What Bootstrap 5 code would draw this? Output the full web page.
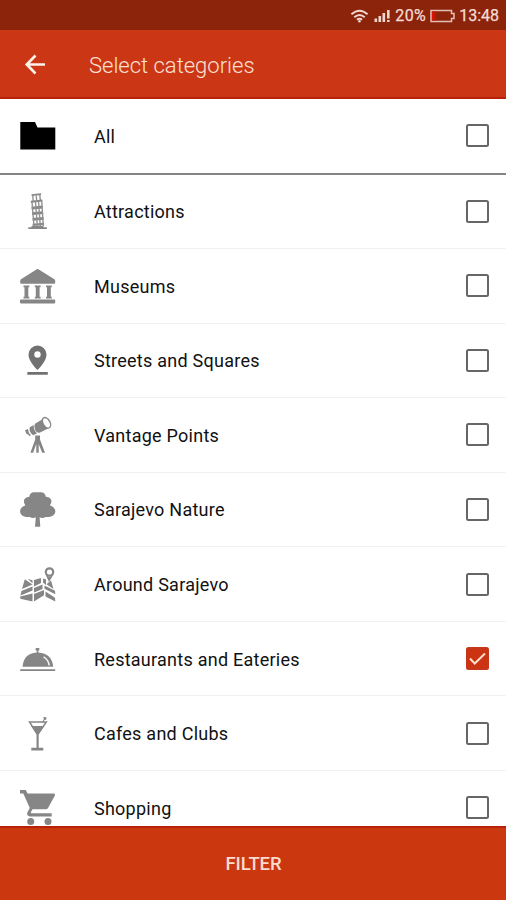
<!DOCTYPE html>
<html lang="en">
<head>
<meta charset="utf-8">
<meta name="viewport" content="width=device-width, initial-scale=1">
<title>Select categories</title>
<link href="https://cdn.jsdelivr.net/npm/bootstrap@5.3.0/dist/css/bootstrap.min.css" rel="stylesheet">
<style>
body{font-family:Roboto,"Liberation Sans",sans-serif;height:900px;background:#fff;color:#111}
.status-bar{height:30px;background:#8c240c;color:#f3dcd4;font-size:16px;padding:1px 7px 0 0}
.clock-text,.battery-text{-webkit-text-stroke:.25px #f3dcd4}
.battery-text{letter-spacing:.4px}
.app-bar{height:69px;background:#cb3714;border-bottom:2px solid #b92208;padding:2px 0 0 23px}
.app-title{font-size:22px;font-weight:300;color:#fbe0d6;margin-left:42px;letter-spacing:0;padding-top:3px}
.back-btn{width:24px;height:24px}
.category-list{min-height:0}
.category-row{height:74.55px;flex:none;border-bottom:1.5px solid #f2f2f2;padding:0 17px 0 18px;border-radius:0}
.category-row.row-all{height:75.5px;border-bottom:2px solid #858585}
.category-row svg{width:40px;height:40px;flex:none;fill:#868686}
.category-name{font-size:18px;margin-left:36px;letter-spacing:.25px;line-height:24px;padding-top:2px}
.check-box.form-check-input{width:23px;height:23px;margin:0;border:2px solid #666;border-radius:2.5px;background-size:21px;flex:none;background-color:#fff}
.check-box.form-check-input:checked{background-color:#cc3312;border-color:#c5371a;background-image:url("data:image/svg+xml,%3Csvg xmlns='http://www.w3.org/2000/svg' viewBox='0 0 21 21'%3E%3Cpath d='M3 10.5l4.7 5L18 5.5' fill='none' stroke='%23fbe0cd' stroke-width='2'/%3E%3C/svg%3E")}
.filter-btn.btn{height:74px;background:#cb370f;border:0;border-top:2px solid #b92208;border-radius:0;color:#fbdccf;font-size:18.500px;font-weight:500;letter-spacing:-.1px;flex:none;padding:2px 0 0 1px}
</style>
</head>
<body class="d-flex flex-column overflow-hidden">
<div class="status-bar d-flex align-items-center justify-content-end flex-shrink-0">
  <svg width="19" height="16" viewBox="0 0 20 16" fill="none" stroke="#f0d5cc" stroke-width="2"><path d="M1.500 6.200Q10-1.200 18.500 6.200M4.500 9.300Q10 4.500 15.500 9.300M7.300 12Q10 9.800 12.700 12"/><circle cx="10" cy="13.500" r="1.300" fill="#f0d5cc" stroke="none"/></svg>
  <svg class="ms-1 me-1" width="18" height="14" viewBox="0 0 17 14" fill="#f0d5cc"><path d="M1 9.500h2.600V13H1zM5 7h2.600v6H5zM9 4h2.600v9H9zM13.500 1h2.600v8.500h-2.600zM13.500 11h2.600v2h-2.600z"/></svg>
  <span class="battery-text">20%</span>
  <svg class="mx-1" width="25" height="14" viewBox="0 0 25 14"><path d="M1 1.500h20.500v3H24v5h-2.500v3H1z" fill="none" stroke="#e3bfb3" stroke-width="1.500"/><path d="M2 2.500h3v9H2z" fill="#d11405"/></svg>
  <span class="clock-text">13:48</span>
</div>
<header class="app-bar d-flex align-items-center flex-shrink-0">
  <svg class="back-btn" viewBox="0 0 24 24" fill="none" stroke="#fff2ea" stroke-width="2.600"><path d="M22 11.500H4M12.500 2.500L3.700 11.500l8.800 9"/></svg>
  <h1 class="app-title mb-0">Select categories</h1>
</header>
<main class="category-list list-group list-group-flush flex-grow-1 overflow-hidden rounded-0">
  <label class="category-row row-all d-flex align-items-center">
    <svg viewBox="0 0 40 40"><path d="M2.300 6H17l2.500 5.500h17.800V33.500h-35z" fill="#000"/></svg>
    <span class="category-name flex-grow-1">All</span><input class="form-check-input check-box" type="checkbox">
  </label>
  <label class="category-row d-flex align-items-center">
    <svg viewBox="0 0 40 40"><path d="M13.500 3.300l9.500-1 .2 1.700-9.500 1zM12.700 9.700l11.600-1.200.2 2-11.600 1.200zM13.500 15.700l11-1.100.2 2.800-11 1.100zM14 21.300l11-1.100.2 2.800-11 1.100zM14.500 27l11-1.100.2 2.800-11 1.100zM14.500 32.800l11.500-1.100.2 2.200-11.500 1zM13.500 35h12v1.200h3.400v1.900h-18.600v-1.900h3.200z"/><path d="M14.800 5l.4 5M18.300 4.500l.3 5M21.800 4l.5 5M14 11l2 24M17.500 11l1.800 24M20.500 10l1.800 25M23.700 10l1.600 25" fill="none" stroke="#929292" stroke-width="1.400"/></svg>
    <span class="category-name flex-grow-1">Attractions</span><input class="form-check-input check-box" type="checkbox">
  </label>
  <label class="category-row d-flex align-items-center">
    <svg viewBox="0 0 40 40"><path d="M18.800 3.300q.8-.5 1.600 0L36 13q1.200.8 1.200 1.800v2q0 .9-1 .9h-33q-1 0-1-.9v-2q0-1 1.200-1.800zM5.500 19.500h5.800v1.800H10.300v9.500h1v1.700H5.500v-1.700h1v-9.500h-1zM16.800 19.500h5.800v1.800h-1v9.500h1v1.700h-5.800v-1.700h1v-9.500h-1zM28 19.500h5.800v1.800h-1v9.500h1v1.700H28v-1.700h1v-9.500H28z"/><rect x="2" y="33.600" width="35.200" height="3.800" rx=".8"/></svg>
    <span class="category-name flex-grow-1">Museums</span><input class="form-check-input check-box" type="checkbox">
  </label>
  <label class="category-row d-flex align-items-center">
    <svg viewBox="0 0 40 40"><path fill-rule="evenodd" fill="#717171" d="M19.500 5.500a9 9 0 0 1 9 9c0 5.500-5 11.500-9 15.500-4-4-9-10-9-15.500a9 9 0 0 1 9-9zm0 5.800a3.200 3.200 0 1 0 0 6.400 3.200 3.200 0 0 0 0-6.400zM9.300 32h20.500v2.700H9.300z"/></svg>
    <span class="category-name flex-grow-1">Streets and Squares</span><input class="form-check-input check-box" type="checkbox">
  </label>
  <label class="category-row d-flex align-items-center">
    <svg viewBox="0 0 40 40"><path d="M17 8.800L26 3.200 31.500 12.700 21.500 17.700Q18.500 18 17 14.500 15.500 11 17 8.800zM11.700 12.300l4-2.200q-.5 4.800 3.300 8.200l-3.700 2q-4.500-2.800-3.600-8zM7 15.300l3-1.300q.2 4 3 6.300l-1.800.8q-.8-2.200-2.700-2.100z"/><ellipse cx="28.500" cy="7.800" rx="3.500" ry="5.700" transform="rotate(-30 28.500 7.800)" fill="#fff" stroke="#868686" stroke-width="1.400"/><path d="M17.200 20.500h4.800v4l5 13.200h-2.800l-4.800-11.700-4.300 11.700h-2.700l4.800-13.200zM18.300 26h2.400v11.700h-2.400z"/></svg>
    <span class="category-name flex-grow-1">Vantage Points</span><input class="form-check-input check-box" type="checkbox">
  </label>
  <label class="category-row d-flex align-items-center">
    <svg viewBox="0 0 40 40"><path d="M16 3.200h7c2.800 0 4.500 2 4.800 4.600 4 .2 6.200 2.700 5.500 5.400-.2 1.300-1.200 2.200-1.200 3.200 3.400 1 5.500 3.700 5.200 6.400-.4 4-5 5.700-9.700 5.100-1.900 1.400-4.400 1.400-6 .4l.7 9.400h-5.300l.8-9.400c-1.700 1-4.200 1-6.100-.4-4.700.6-9.200-1.100-9.600-5.100-.3-2.700 1.800-5.400 5.100-6.400 0-1-1-1.900-1.200-3.200-.7-2.700 1.500-5.200 5.300-5.400.3-2.600 2-4.600 4.700-4.600z"/></svg>
    <span class="category-name flex-grow-1">Sarajevo Nature</span><input class="form-check-input check-box" type="checkbox">
  </label>
  <label class="category-row d-flex align-items-center">
    <svg viewBox="0 0 40 40"><circle cx="31.500" cy="8" r="3.700" fill="none" stroke="#868686" stroke-width="2.200"/><path d="M27.500 10.500L31 18l4.500-7.500-4 2.500zM6.800 15.300l7.700 5.200-10.500 4.500zM9.800 15l4.700 1.200v3zM16 16l7-2v5L16 22.500zM25 14.500l3 1v5.500l-3-2.500zM33 16.500l2.500 8.500-7-4.800zM3.500 27l11-4.500v4L2.500 31.500zM16 24l8.500-3.500v4.500L16 28.500zM26.500 21.500l10.500 5.200.3 3.500-10.800-5.500zM2.300 32.500l12.200-3V37.500L2.300 34.800zM16 30l10-4v5.200L16 37.500zM27.500 27.500l9.500 6.200.3 3.800-9.800-5z"/></svg>
    <span class="category-name flex-grow-1">Around Sarajevo</span><input class="form-check-input check-box" type="checkbox">
  </label>
  <label class="category-row d-flex align-items-center">
    <svg viewBox="0 0 40 40"><path d="M17.700 8.900h3.600v2.700h-1v1.900Q34 14.500 35.200 27.800H4.600Q5.500 14.500 18.700 13.500v-1.900h-1zM2.200 30.200h35v1.900h-35z"/><path d="M25.500 17.800q5 2.800 5.700 8.700" fill="none" stroke="#f4f4f4" stroke-width="1.500"/></svg>
    <span class="category-name flex-grow-1">Restaurants and Eateries</span><input class="form-check-input check-box" type="checkbox" checked>
  </label>
  <label class="category-row d-flex align-items-center">
    <svg viewBox="0 0 40 40"><path d="M11.500 9h16.800L20.500 20.500h-1.700z" fill="none" stroke="#868686" stroke-width="1.500"/><path d="M13.200 13h13l-5.500 8v13.700h4.600V37.500H13.300v-2.800h5.200V21zM25.500 3.700l3.200.7-.7 2.300-1.500.2-1.500 3-1-.3 1.800-3.400z"/></svg>
    <span class="category-name flex-grow-1">Cafes and Clubs</span><input class="form-check-input check-box" type="checkbox">
  </label>
  <label class="category-row d-flex align-items-center">
    <svg viewBox="0 0 40 40"><path d="M2 2h5.800l1.700 3.600h26.300q1.500.2 1.200 1.700l-6.800 12.500q-.8 1.500-2.400 1.500H14.500l-1.700 3q-.2.900.7.900h20.200v3.300H12q-3.500-.6-2.700-4l2.500-4.600L5.300 5.500H2z"/><circle cx="12.700" cy="33.600" r="3.500"/><circle cx="30" cy="33.600" r="3.500"/></svg>
    <span class="category-name flex-grow-1">Shopping</span><input class="form-check-input check-box" type="checkbox">
  </label>
</main>
<button type="button" class="btn filter-btn w-100">FILTER</button>
<script src="https://cdn.jsdelivr.net/npm/bootstrap@5.3.0/dist/js/bootstrap.bundle.min.js"></script>
</body>
</html>
